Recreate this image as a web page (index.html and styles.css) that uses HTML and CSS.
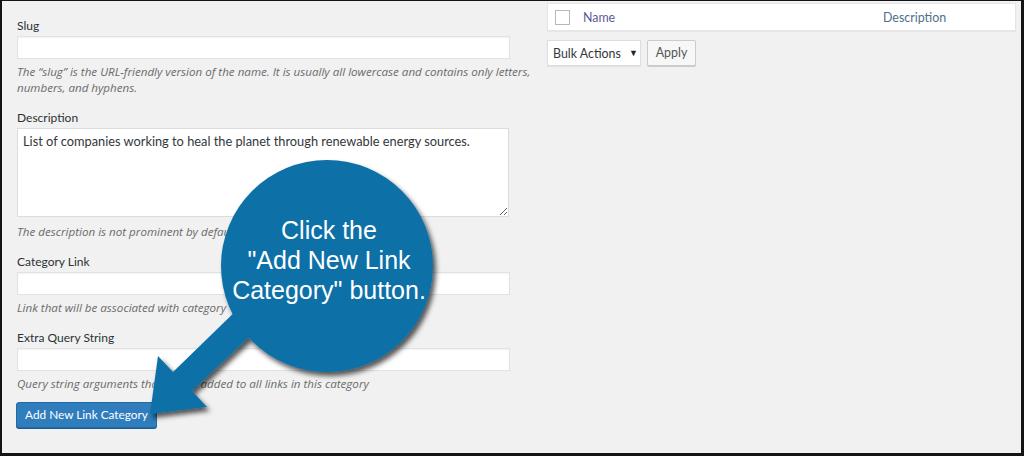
FILE: index.html
```html
<!DOCTYPE html>
<html lang="en">
<head>
<meta charset="utf-8">
<title>Link Categories</title>
<link rel="stylesheet" href="styles.css">
</head>
<body>
<div class="frame">
  <div class="col-left">
    <div class="field">
      <label class="lbl">Slug</label>
      <div class="input"></div>
      <p class="help">The “slug” is the URL-friendly version of the name. It is usually all lowercase and contains only letters, numbers, and hyphens.</p>
    </div>
    <div class="field">
      <label class="lbl">Description</label>
      <textarea class="textarea">List of companies working to heal the planet through renewable energy sources.</textarea>
      <p class="help help-ta">The description is not prominent by default; however, some themes may show it.</p>
    </div>
    <div class="field">
      <label class="lbl">Category Link</label>
      <div class="input"></div>
      <p class="help">Link that will be associated with category</p>
    </div>
    <div class="field field-last">
      <label class="lbl">Extra Query String</label>
      <div class="input"></div>
      <p class="help">Query string arguments that will be added to all links in this category</p>
    </div>
    <div class="btn-primary">Add New Link Category</div>
  </div>
  <div class="col-right">
    <div class="thead">
      <span class="cb"></span>
      <span class="th-name">Name</span>
      <span class="th-desc">Description</span>
    </div>
    <div class="actions">
      <div class="select">Bulk Actions <span class="caret">▼</span></div>
      <div class="btn">Apply</div>
    </div>
  </div>

  <svg class="callout-shape" width="1024" height="456" viewBox="0 0 1024 456" aria-hidden="true">
    <defs>
      <filter id="sh" x="-20%" y="-20%" width="150%" height="150%">
        <feDropShadow dx="3" dy="4" stdDeviation="2.5" flood-color="#000" flood-opacity="0.65"/>
      </filter>
    </defs>
    <g filter="url(#sh)" fill="#0d6fa7">
      <polygon points="244,303 264,323 192,391 207,407 150,414 158,356 173,372"/>
      <circle cx="327" cy="266" r="106"/>
    </g>
  </svg>
  <div class="callout-text">Click the<br>"Add New Link<br>Category" button.</div>
</div>
</body>
</html>
```
FILE: styles.css
```css
* { box-sizing: border-box; }
html, body { margin: 0; padding: 0; }
body { width: 1024px; height: 456px; overflow: hidden; background: #111; }

.frame {
  position: relative;
  width: 1024px;
  height: 456px;
  border-style: solid;
  border-color: #141414;
  border-width: 1px 3px 3px 2px;
  background: #f1f1f1;
  display: grid;
  grid-template-columns: 529px 1fr;
  font-family: Lato, "Open Sans", sans-serif;
  color: #23282d;
}

.col-left { padding: 16px 0 0 15px; }

.field { margin-bottom: 13px; }
.field-last { margin-bottom: 10px; }
.lbl { display: block; font-size: 12px; line-height: 18px; margin-bottom: 1px; color: #2c3136; }
.input {
  width: 493px; height: 23px;
  background: #fff;
  border: 1px solid #e2e2e2;
  box-shadow: inset 0 1px 2px rgba(0,0,0,.05);
}
.textarea {
  display: block;
  width: 492px; height: 89px;
  margin: 0;
  background: #fff;
  border: 1px solid #dcdcdc;
  padding: 3px 5px;
  font-family: Lato, "Open Sans", sans-serif;
  font-size: 12.8px;
  line-height: 18px;
  color: #32373c;
  resize: both;
}
.help {
  margin: 5px 0 0;
  width: 514px;
  font-family: "Open Sans", "Noto Sans", sans-serif;
  font-size: 11.6px;
  line-height: 16px;
  font-style: italic;
  color: #6b6b6b;
}
.help-ta { margin-top: 7px; }

.btn-primary {
  display: block;
  width: 141px;
  height: 26px;
  line-height: 24px;
  text-align: center;
  margin-left: -1px;
  background: #2f7dbd;
  border: 1px solid #236aa3;
  border-radius: 3px;
  color: #fff;
  font-size: 11.8px;
  box-shadow: 0 1px 0 #1d5c8f;
}

.col-right { padding: 2px 5px 0 16px; }
.thead {
  height: 28px;
  background: #fff;
  border: 1px solid #e5e5e5;
  display: flex;
  align-items: center;
  padding-left: 7px;
  font-size: 12.4px;
  box-shadow: 0 1px 1px rgba(0,0,0,.04);
}
.cb {
  width: 15px; height: 15px;
  border: 1px solid #b4b9be;
  background: #fff;
  margin-right: 13px;
}
.th-name { color: #5b5c9a; width: 300px; }
.th-desc { color: #4f6e8e; }

.actions { display: flex; gap: 6px; margin-top: 9px; }
.select {
  height: 26px;
  width: 94px;
  background: #fff;
  border: 1px solid #dedede;
  font-size: 12.4px;
  line-height: 24px;
  padding-left: 5px;
  color: #32373c;
  white-space: nowrap;
  box-shadow: 0 1px 1px rgba(0,0,0,.06);
}
.caret { font-size: 9px; margin-left: 5px; vertical-align: 2px; color: #222; }
.btn {
  height: 26px;
  width: 49px;
  text-align: center;
  background: #f7f7f7;
  border: 1px solid #cccccc;
  border-radius: 2px;
  font-size: 12.4px;
  line-height: 24px;
  color: #555;
  box-shadow: 0 1px 0 #ccc;
}

.callout-shape { position: absolute; left: -2px; top: -1px; pointer-events: none; }
.callout-text {
  position: absolute;
  left: 225px; top: 214px;
  width: 204px;
  text-align: center;
  font-family: "Liberation Sans", Arial, sans-serif;
  font-size: 25px;
  line-height: 30px;
  color: #fff;
}
```
